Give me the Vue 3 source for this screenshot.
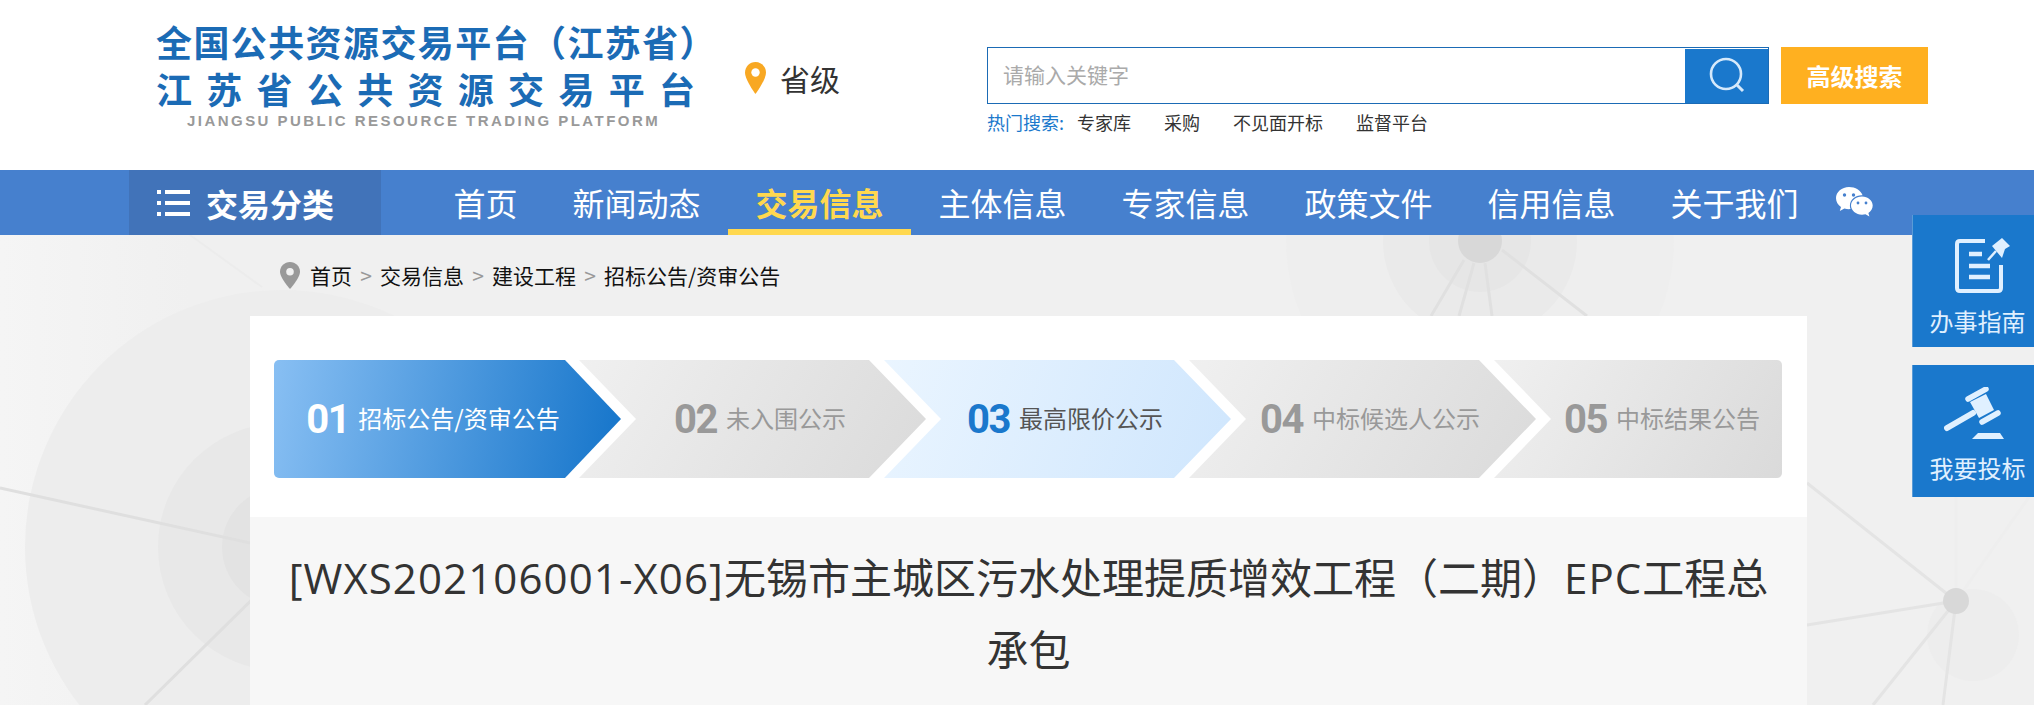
<template>
  <div class="page">
    <!-- network pattern behind the content -->
    <svg class="bg-art" width="2034" height="705" viewBox="0 0 2034 705">
      <defs>
        <linearGradient id="edge" x1="0" y1="0" x2="1" y2="0">
          <stop offset="0" stop-color="#f5f5f5" />
          <stop offset="1" stop-color="#f0f0f0" />
        </linearGradient>
      </defs>
      <rect x="0" y="235" width="190" height="470" fill="url(#edge)" />
      <circle cx="282" cy="547" r="257" fill="#ededed" />
      <circle cx="282" cy="547" r="124" fill="#e8e8e8" />
      <circle cx="282" cy="547" r="60" fill="#e3e3e3" />
      <path d="M190 235L262 287" stroke="#ececec" stroke-width="2" />
      <path d="M0 488L282 550M282 570L145 705" stroke="#dfdfdf" stroke-width="3" fill="none" />
      <circle cx="1480" cy="241" r="194" fill="#eeeeee" />
      <circle cx="1480" cy="241" r="97" fill="#eaeaea" />
      <circle cx="1480" cy="241" r="51" fill="#e6e6e6" />
      <path d="M1464 260L1431 316M1474 263L1459 316M1485 263L1492 316M1502 250L1587 316" stroke="#e0e0e0" stroke-width="3" fill="none" />
      <circle cx="1480" cy="241" r="22" fill="#d8d8d8" />
      <circle cx="1973" cy="635" r="46" fill="#ededed" />
      <path d="M1807 483L1956 601M1807 625L1956 601M1956 601L1873 705M1956 601L1943 705" stroke="#e4e4e4" stroke-width="3" fill="none" />
      <path d="M1956 601L1956 490M1956 601L2034 490" stroke="#eeeeee" stroke-width="3" fill="none" />
      <circle cx="1956" cy="601" r="13" fill="#d8d8d8" />
    </svg>

    <header class="top">
      <div class="logo">
        <div class="logo-line">全国公共资源交易平台（江苏省）</div>
        <div class="logo-line logo-wide">江苏省公共资源交易平台</div>
        <div class="logo-en">JIANGSU PUBLIC RESOURCE TRADING PLATFORM</div>
      </div>
      <div class="region">
        <svg width="21" height="32" viewBox="0 0 21 32">
          <path d="M10.5 0C4.7 0 0 4.7 0 10.5 0 18 10.5 32 10.5 32S21 18 21 10.5C21 4.7 16.3 0 10.5 0z" fill="#f8a823" />
          <circle cx="10.5" cy="10.5" r="4.2" fill="#fff" />
        </svg>
        <span>省级</span>
      </div>
      <div class="search">
        <div class="search-row">
          <div class="search-box">
            <input class="search-input" placeholder="请输入关键字" />
            <button class="search-btn">
              <svg width="38" height="38" viewBox="0 0 38 38">
                <circle cx="18" cy="17" r="15" fill="none" stroke="#d5e9fb" stroke-width="2.6" />
                <path d="M29 28l6 6" stroke="#d5e9fb" stroke-width="3" />
              </svg>
            </button>
          </div>
          <button class="adv-btn">高级搜索</button>
        </div>
        <div class="hot">
          <span class="hot-label">热门搜索:</span>
          <a v-for="word in hotWords" :key="word">{{ word }}</a>
        </div>
      </div>
    </header>

    <nav class="nav">
      <div class="cat">
        <svg width="33" height="28" viewBox="0 0 33 28" fill="#fff">
          <rect x="0" y="1" width="4" height="4" />
          <rect x="8" y="1" width="25" height="4" />
          <rect x="0" y="12" width="4" height="4" />
          <rect x="8" y="12" width="25" height="4" />
          <rect x="0" y="23" width="4" height="4" />
          <rect x="8" y="23" width="25" height="4" />
        </svg>
        <span>交易分类</span>
      </div>
      <div class="nav-items">
        <a v-for="item in navItems" :key="item" :class="['nav-item', { active: item === '交易信息' }]">{{ item }}</a>
      </div>
      <svg class="wechat" width="37" height="31" viewBox="0 0 37 31">
        <path d="M13 0C5.8 0 0 5 0 11.2c0 3.600 2 6.800 5 8.800L3.800 24l4.600-2.400c1.500.4 3 .6 4.600.6.500 0 1 0 1.500-.1-.4-1.100-.6-2.200-.6-3.400 0-5.800 5.300-10.400 11.800-10.400h.9C24.800 3.500 19.400 0 13 0z" fill="#fff" />
        <path d="M26 9.500c-6 0-11 4.100-11 9.100s5 9.100 11 9.100c1.200 0 2.400-.2 3.500-.5l3.900 2.300-1-3.400c2.600-1.700 4.300-4.400 4.300-7.500 0-5-4.800-9.100-10.700-9.100z" fill="#fff" />
        <circle cx="8.500" cy="8" r="1.700" fill="#4680ce" />
        <circle cx="17.500" cy="8" r="1.700" fill="#4680ce" />
        <circle cx="22" cy="16" r="1.400" fill="#4680ce" />
        <circle cx="30" cy="16" r="1.400" fill="#4680ce" />
      </svg>
    </nav>

    <main class="main">
      <div class="crumbs">
        <svg width="20" height="27" viewBox="0 0 20 27">
          <path d="M10 0C4.500 0 0 4.400 0 9.800 0 16 10 27 10 27s10-11 10-17.200C20 4.400 15.500 0 10 0z" fill="#999" />
          <circle cx="10" cy="9.800" r="3.800" fill="#f0f0f0" />
        </svg>
        <template v-for="(crumb, i) in crumbs" :key="crumb">
          <span v-if="i" class="crumb-sep">&gt;</span>
          <a class="crumb">{{ crumb }}</a>
        </template>
      </div>

      <section class="card">
        <div class="steps-wrap">
          <div class="steps">
            <div v-for="step in steps" :key="step.no" :class="['step', step.kind]">
              <span class="step-no">{{ step.no }}</span>
              <span class="step-label">{{ step.label }}</span>
            </div>
          </div>
        </div>
        <h1 class="title"><span class="latin">[WXS202106001-X06]</span>无锡市主城区污水处理提质增效工程（二期）<span class="latin">EPC</span>工程总<br />承包</h1>
      </section>
    </main>

    <aside class="side">
      <a class="side-btn">
        <svg class="icon-guide" width="56" height="57" viewBox="0 0 56 57" fill="none" stroke="#e0f0ff">
          <path d="M30 4H5Q2 4 2 7V51Q2 54 5 54H43Q46 54 46 51V28" stroke-width="4" />
          <path d="M14 17H27M14 29H35M14 40H35" stroke-width="4.500" />
          <path d="M33 23L41 14" stroke-width="2.500" />
          <path d="M37 9L47 1L55 9L50 12L47 21Z" fill="#e0f0ff" stroke="none" />
        </svg>
        <span>办事指南</span>
      </a>
      <a class="side-btn">
        <svg class="icon-bid" width="60" height="54" viewBox="0 0 60 54" fill="none" stroke="#e0f0ff" stroke-linecap="round">
          <path d="M3 41L29 26" stroke-width="6" />
          <path d="M24 12L42 2M38 35L54 26" stroke-width="5.500" />
          <path d="M26 15L42 7L50 23L35 31Z" fill="#e0f0ff" stroke="none" />
          <path d="M34 46H56L60 52H28Z" fill="#e0f0ff" stroke="none" />
        </svg>
        <span>我要投标</span>
      </a>
    </aside>
  </div>
</template>

<script setup>
const hotWords = ['专家库', '采购', '不见面开标', '监督平台']
const navItems = ['首页', '新闻动态', '交易信息', '主体信息', '专家信息', '政策文件', '信用信息', '关于我们']
const crumbs = ['首页', '交易信息', '建设工程', '招标公告/资审公告']
const steps = [
  { no: '01', label: '招标公告/资审公告', kind: 'done' },
  { no: '02', label: '未入围公示', kind: 'off' },
  { no: '03', label: '最高限价公示', kind: 'on' },
  { no: '04', label: '中标候选人公示', kind: 'off' },
  { no: '05', label: '中标结果公告', kind: 'off' },
]
</script>

<style>
html, body {
  margin: 0;
  overflow: hidden;
  background: #f0f0f0;
}
</style>

<style scoped>
.page {
  position: relative;
  height: 705px;
  overflow: hidden;
  font-family: "Noto Sans CJK SC", sans-serif;
  color: #333;
}

.bg-art {
  position: absolute;
  left: 0;
  top: 0;
}

.top {
  position: relative;
  display: flex;
  height: 170px;
  padding-left: 156px;
  background: #fff;
}

.logo {
  width: 541px;
  padding-top: 18px;
  color: #1b6bb5;
  font-weight: 700;
  font-size: 36px;
  line-height: 47px;
  letter-spacing: 1.4px;
  white-space: nowrap;
}

.logo-wide {
  letter-spacing: 14.3px;
}

.logo-en {
  margin: 1px 0 0 31px;
  font-family: "Liberation Sans", sans-serif;
  font-size: 15px;
  line-height: 16px;
  letter-spacing: 2.46px;
  color: #999;
}

.region {
  display: flex;
  align-items: center;
  gap: 14px;
  height: 32px;
  margin: 62px 0 0 48px;
  width: 242px;
  font-size: 30px;
}

.search {
  width: 941px;
  padding-top: 47px;
}

.search-row {
  display: flex;
  gap: 12px;
}

.search-box {
  display: flex;
  box-sizing: border-box;
  width: 783px;
  height: 57px;
  border: 1px solid #1b6bb5;
}

.search-input {
  flex: 1;
  min-width: 0;
  padding: 0 15px 4px;
  border: 0;
  outline: 0;
  font: inherit;
  font-size: 21px;
  background: transparent;
}

.search-input::placeholder {
  color: #aaa;
}

.search-btn {
  display: flex;
  align-items: center;
  justify-content: center;
  width: 83px;
  margin-top: 1px;
  padding: 0;
  border: 0;
  background: #1a78cc;
}

.adv-btn {
  width: 147px;
  height: 57px;
  padding: 0;
  border: 0;
  background: #ffb020;
  color: #fff;
  font: inherit;
  font-weight: 700;
  font-size: 24px;
}

.hot {
  display: flex;
  align-items: center;
  margin-top: 5px;
  font-size: 18px;
  line-height: 26px;
  color: #333;
}

.hot-label {
  width: 90px;
  color: #1a78cc;
}

.hot a {
  margin-right: 33px;
}

.nav {
  position: relative;
  display: flex;
  align-items: stretch;
  height: 65px;
  padding-left: 129px;
  background: #4680ce;
  color: #fff;
}

.cat {
  display: flex;
  align-items: center;
  gap: 16px;
  width: 252px;
  box-sizing: border-box;
  padding-left: 28px;
  background: #4173b9;
  font-weight: 700;
  font-size: 32px;
}

.nav-items {
  display: flex;
  margin-left: 45px;
}

.nav-item {
  padding: 0 27.500px;
  font-size: 32px;
  line-height: 65px;
  white-space: nowrap;
}

.nav-item.active {
  box-shadow: inset 0 -6px 0 #ffd84f;
  color: #ffd84f;
  font-weight: 700;
}

.wechat {
  align-self: center;
  margin-left: 10px;
}

.main {
  position: relative;
  width: 1557px;
  margin-left: 250px;
}

.crumbs {
  display: flex;
  align-items: center;
  height: 80px;
  padding: 0 0 1px 30px;
  font-size: 21px;
  color: #111;
}

.crumbs svg {
  margin-right: 10px;
}

.crumb-sep {
  width: 28px;
  text-align: center;
  color: #999;
}

.card {
  background: #fff;
}

.steps-wrap {
  padding: 44px 25px 39px 24px;
}

.steps {
  display: flex;
  height: 118px;
}

.step {
  display: flex;
  flex: 0 0 347px;
  align-items: center;
  justify-content: center;
  box-sizing: border-box;
  margin-left: -42px;
  padding-left: 15px;
  white-space: nowrap;
  clip-path: polygon(0 0, calc(100% - 57px) 0, 100% 50%, calc(100% - 57px) 100%, 0 100%, 57px 50%);
}

.step:first-child {
  margin-left: 0;
  padding: 0 29px 0 0;
  border-radius: 5px 0 0 5px;
  clip-path: polygon(0 0, calc(100% - 56px) 0, 100% 50%, calc(100% - 56px) 100%, 0 100%);
}

.step:last-child {
  flex-basis: 288px;
  padding-left: 48px;
  border-radius: 0 5px 5px 0;
  clip-path: polygon(0 0, 100% 0, 100% 100%, 0 100%, 57px 50%);
}

.step-no {
  margin-right: 9px;
  font-family: Roboto, sans-serif;
  font-weight: 700;
  font-size: 40px;
  letter-spacing: -1.5px;
}

.step-label {
  font-size: 24px;
  line-height: 28px;
  margin-bottom: 2px;
}

.done {
  background: linear-gradient(100deg, #88bff3, #1a78cc 95%);
  color: #fff;
}

.off {
  background: linear-gradient(120deg, #f0f0f0, #dadada);
  color: #999;
}

.on {
  background: linear-gradient(110deg, #eaf5ff, #cfe6fd);
  color: #555;
}

.on .step-no {
  color: #1a78cc;
}

.title {
  margin: 0;
  padding: 25px 35px 26px;
  background: #f7f7f7;
  font-family: "Open Sans", "Noto Sans CJK SC", sans-serif;
  font-weight: 400;
  font-size: 42px;
  line-height: 72px;
  text-align: center;
  color: #333;
}

.latin {
  letter-spacing: 1.1px;
}

.side {
  position: absolute;
  right: 0;
  top: 215px;
  display: flex;
  flex-direction: column;
  gap: 18px;
  width: 122px;
}

.side-btn {
  display: flex;
  flex-direction: column;
  align-items: center;
  box-sizing: border-box;
  height: 132px;
  padding: 22px 0 0 8px;
  border-left: 1px solid #5a9bd6;
  background: #1a78cc;
  color: #e0f0ff;
  font-size: 24px;
  line-height: 30px;
}

.side-btn span {
  margin-top: 12px;
}

.icon-guide {
  margin-left: 10px;
}

.icon-bid {
  margin-left: -8px;
}
</style>
